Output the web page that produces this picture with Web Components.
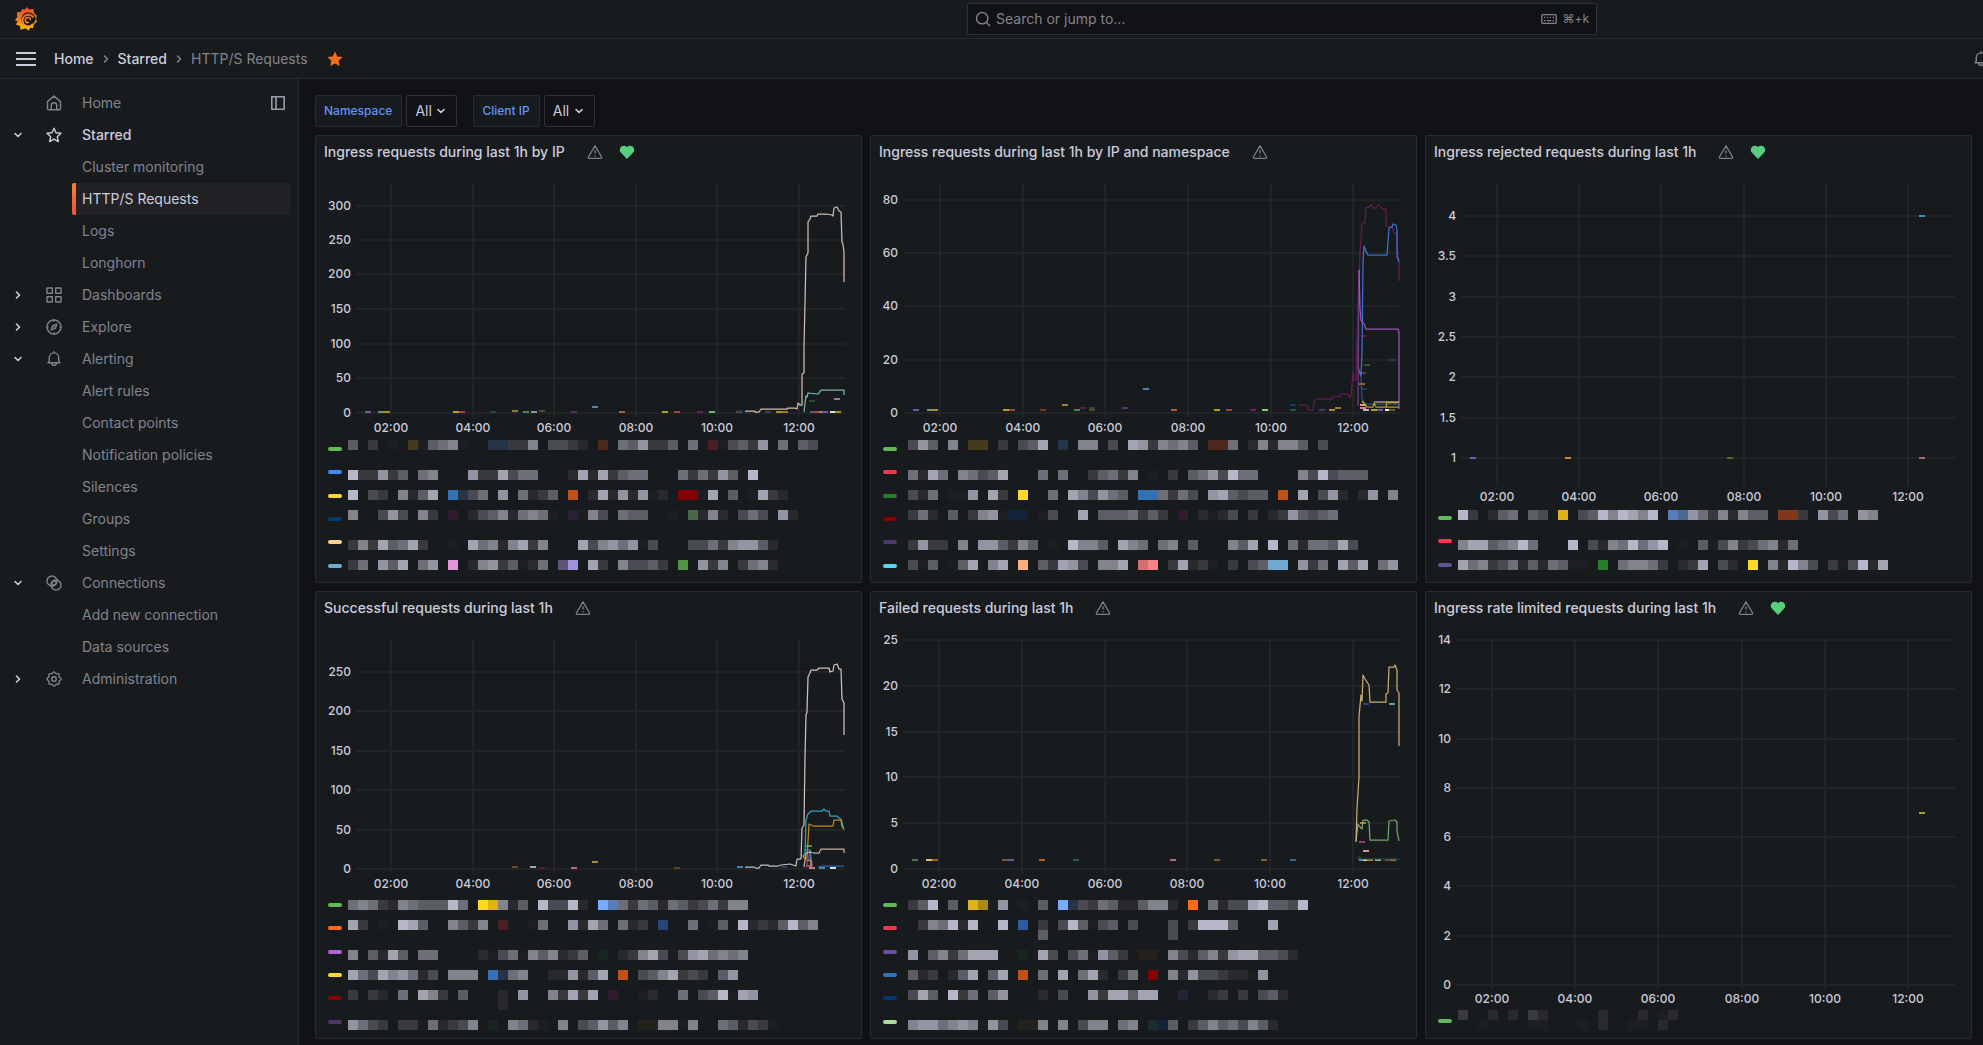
<!DOCTYPE html>
<html lang="en">
<head>
<meta charset="utf-8">
<title>HTTP/S Requests - Grafana</title>
<style>
  html { background: #111217; }
  body {
    margin: 0;
    font: 14px/20px Inter, "Liberation Sans", sans-serif;
    color: #ccccdc;
    --panel: #171b1d;
    --canvas: #111216;
    --line: #282b2f;
    --line-strong: #303238;
    --muted: #83838d;
  }
</style>
</head>
<body>
<app-shell>
  <top-bar slot="top"></top-bar>
  <crumb-bar slot="top"></crumb-bar>
  <side-nav slot="nav"></side-nav>
  <variable-bar>
    <variable-picker name="Namespace"></variable-picker>
    <variable-picker name="Client IP"></variable-picker>
  </variable-bar>
  <panel-grid>
    <dash-panel heading="Ingress requests during last 1h by IP" healthy><time-chart series="ip"></time-chart><series-legend series="ip"></series-legend></dash-panel>
    <dash-panel heading="Ingress requests during last 1h by IP and namespace"><time-chart series="ipns"></time-chart><series-legend series="ipns"></series-legend></dash-panel>
    <dash-panel heading="Ingress rejected requests during last 1h" healthy><time-chart series="rejected"></time-chart><series-legend series="rejected"></series-legend></dash-panel>
    <dash-panel heading="Successful requests during last 1h"><time-chart series="success"></time-chart><series-legend series="success"></series-legend></dash-panel>
    <dash-panel heading="Failed requests during last 1h"><time-chart series="failed"></time-chart><series-legend series="failed"></series-legend></dash-panel>
    <dash-panel heading="Ingress rate limited requests during last 1h" healthy><time-chart series="limited"></time-chart><series-legend series="limited"></series-legend></dash-panel>
  </panel-grid>
</app-shell>

<script>
const stroke = 'fill="none" stroke="currentColor" stroke-width="1.4" stroke-linecap="round" stroke-linejoin="round"';
const icons = {
  menu: '<path d="M0 2h20M0 8h20M0 14h20" fill="none" stroke="currentColor" stroke-width="2"/>',
  home: `<path d="M1.5 6.6 8 1.1l6.5 5.5v6.9a1.3 1.3 0 0 1-1.3 1.3H2.8a1.3 1.3 0 0 1-1.3-1.3zM5.3 14.6v-4.1a2.7 2.7 0 0 1 5.4 0v4.1" ${stroke}/>`,
  star: `<path d="M8 1.2 10 5.8l5 .5-3.7 3.4 1 4.9L8 12.1l-4.3 2.5 1-4.9L1 6.3l5-.5z" ${stroke}/>`,
  starFill: '<path d="M8 .4l2.3 5 5.3.6-3.9 3.7 1 5.4L8 12.4l-4.7 2.7 1-5.4L.4 6l5.3-.6z" fill="#f46d1b"/>',
  apps: `<path d="M1 1h5.3v5.3H1zM9.7 1H15v5.3H9.7zM1 9.7h5.3V15H1zM9.7 9.7H15V15H9.7z" ${stroke}/>`,
  compass: `<circle cx="8" cy="8" r="7" ${stroke}/><path d="M10.9 5.1 9.3 9.3l-4.2 1.6 1.6-4.2zM8 1v1M8 14v1M1 8h1M14 8h1" ${stroke}/><circle cx="8" cy="8" r=".8" fill="currentColor"/>`,
  bell: `<path d="M2 11.8h12l-1.3-2V6.6a4.7 4.7 0 0 0-9.4 0v3.2zM8 1.9V.7M5.6 12a2.4 2.4 0 0 0 4.8 0" ${stroke}/>`,
  link: `<circle cx="6" cy="6" r="5" ${stroke}/><circle cx="10" cy="10" r="5" ${stroke}/><path d="M8 5.2 10.8 8 8 10.8 5.2 8z" ${stroke}/>`,
  cog: `<path d="M8 .9c1 0 1.300 1.500 2.100 1.800s2-.6 2.700.2-.2 1.800.2 2.700 2.100 1.200 2.100 2.400-1.600 1.500-2 2.300.5 2-.3 2.800-1.900-.2-2.700.2S9 15.100 8 15.100s-1.300-1.500-2.100-1.800-2 .6-2.700-.2.200-1.900-.2-2.700S.9 9 .9 8s1.600-1.500 2-2.300-.5-2 .3-2.800 1.900.2 2.700-.2S7 .9 8 .9z" ${stroke}/><circle cx="8" cy="8" r="2.300" ${stroke}/>`,
  down: '<path d="M5 6.5 8 9.5l3-3" fill="none" stroke="currentColor" stroke-width="1.6" stroke-linecap="round" stroke-linejoin="round"/>',
  right: '<path d="M6.5 5l3 3-3 3" fill="none" stroke="currentColor" stroke-width="1.6" stroke-linecap="round" stroke-linejoin="round"/>',
  dock: '<path d="M1.8 1.8h12.4v12.4H1.8zM6 2v12" fill="none" stroke="currentColor" stroke-width="1.6" stroke-linejoin="round"/>',
  search: '<circle cx="7.2" cy="7.2" r="5.7" fill="none" stroke="currentColor" stroke-width="1.4"/><path d="M11.4 11.4l3.2 3.2" fill="none" stroke="currentColor" stroke-width="1.4" stroke-linecap="round"/>',
  keyboard: '<rect x=".8" y="3.6" width="14.4" height="8.8" rx="1.2" fill="none" stroke="currentColor" stroke-width="1.3"/><path d="M3 6.4h1.4M6 6.4h1.2M8.8 6.4H10M11.6 6.4H13M3 9.6h1.4M5.6 9.6h4.8M11.6 9.6H13" stroke="currentColor" stroke-width="1.3"/>',
  warning: '<path d="M8 1.8 14.6 13a.9.9 0 0 1-.8 1.3H2.2A.9.9 0 0 1 1.4 13z" fill="none" stroke="currentColor" stroke-width="1.3" stroke-linejoin="round"/><path d="M8 6.2v3.4M8 11.2v1.3" stroke="currentColor" stroke-width="1.3"/>',
  heart: '<path d="M8 15 2 8.8a4 4 0 0 1-.8-4.6C2.400 1.600 6 1 8 3.300c2-2.300 5.600-1.700 6.800.9A4 4 0 0 1 14 8.800z" fill="#58ce7e"/>'
};
const icon = (name, w = 16, h = 16) => `<svg width="${w}" height="${h}" viewBox="0 0 ${w} ${h}" aria-hidden="true">${icons[name]}</svg>`;

/* Shared base: renders view() once into an open shadow root. */
class View extends HTMLElement {
  connectedCallback() {
    if (this.shadowRoot) return;
    this.attachShadow({ mode: 'open' }).innerHTML =
      `<style>*{box-sizing:border-box}svg{display:block;flex:none}a{color:inherit;text-decoration:none}button{appearance:none;background:none;border:0;padding:0;margin:0;font:inherit;color:inherit;display:flex}${this.css()}</style>${this.view()}`;
  }
}

customElements.define('app-shell', class extends View {
  css() { return `:host{display:block;min-height:100vh;overflow:hidden}
    .body{display:grid;grid-template-columns:299px minmax(0,1fr)}
    main{padding:16px 11px 6px 16px;display:flex;flex-direction:column;gap:8px}`; }
  view() { return `<slot name="top"></slot><div class="body"><slot name="nav"></slot><main><slot></slot></main></div>`; }
});

customElements.define('top-bar', class extends View {
  css() { return `:host{display:block;background:var(--panel);border-bottom:1px solid var(--line)}
    .row{height:38px;display:grid;grid-template-columns:952fr 630fr 386fr;padding-left:15px;align-items:center}
    .search{height:32px;display:flex;align-items:center;gap:5px;padding:0 7px;background:var(--canvas);border:1px solid var(--line-strong);border-radius:2px;color:var(--muted)}
    input{flex:1;min-width:0;background:none;border:0;outline:0;padding:0;font:inherit;color:inherit}
    input::placeholder{color:inherit;opacity:1}
    kbd{font:12px/16px Inter,"DejaVu Sans",sans-serif}`; }
  view() { return `<header class="row"><a href="#" aria-label="Grafana"><svg width="22" height="24" viewBox="0 0 22 24">
      <defs><linearGradient id="g" x1="0" y1="0" x2="0" y2="24" gradientUnits="userSpaceOnUse"><stop offset="0" stop-color="#f0402a"/><stop offset=".5" stop-color="#f57e20"/><stop offset="1" stop-color="#fcc60c"/></linearGradient></defs>
      <path fill="url(#g)" d="M11.700 0 14 2.300 18.500 2 19 6 21.700 8.500 21.300 12 21.800 15 19 17.200 18 21.200 15.200 20.800 13.600 23.800 10.800 21.300 5.500 22.800 5 18.900.8 17.500 2.600 14.600 0 13 2.300 10 1.800 5.200 5.800 5 7.200 2 10 2.500z"/>
      <path d="M20.800 12.500a8.300 8.300 0 0 0-8-7.300 7.200 7.200 0 1 0 4.900 12.900z" fill="#171b1d"/>
      <path d="M18.200 16.800a5.900 5.900 0 1 1 .2-6.200" fill="none" stroke="url(#g)" stroke-width="2"/>
      <path d="M15.800 15.400a3.600 3.600 0 1 1-.5-4.500" fill="#171b1d"/>
      <path d="M13.200 15.600a2.600 2.600 0 1 1 2.300-3" fill="none" stroke="url(#g)" stroke-width="1.500" stroke-linecap="round"/></svg></a>
    <div class="search">${icon('search')}<input type="text" placeholder="Search or jump to..." aria-label="Search or jump to">${icon('keyboard')}<kbd>⌘+k</kbd></div></header>`; }
});

customElements.define('crumb-bar', class extends View {
  css() { return `:host{display:block;background:var(--panel);border-bottom:1px solid var(--line)}
    .row{height:39px;display:flex;align-items:center;padding-left:16px}
    nav{flex:1;display:flex;align-items:center;margin-left:18px;gap:4px;font-weight:500}
    nav svg{color:var(--muted)}
    .here{color:var(--muted);font-weight:400}
    .fav{margin-left:15px}
    .bell{color:var(--muted);margin-right:-6px}`; }
  view() { return `<div class="row"><button aria-label="Toggle menu">${icon('menu', 20, 16)}</button>
    <nav aria-label="Breadcrumbs"><a href="#">Home</a>${icon('right')}<a href="#">Starred</a>${icon('right')}<span class="here">HTTP/S Requests</span><button class="fav" aria-label="Unstar">${icon('starFill')}</button></nav>
    <button class="bell" aria-label="News">${icon('bell')}</button></div>`; }
});

const menu = [
  ['Home', 'home', ''], ['Starred', 'star', 'down', 'lit', ['Cluster monitoring', '*HTTP/S Requests', 'Logs', 'Longhorn']],
  ['Dashboards', 'apps', 'right'], ['Explore', 'compass', 'right'],
  ['Alerting', 'bell', 'down', '', ['Alert rules', 'Contact points', 'Notification policies', 'Silences', 'Groups', 'Settings']],
  ['Connections', 'link', 'down', '', ['Add new connection', 'Data sources']],
  ['Administration', 'cog', 'right']
];
customElements.define('side-nav', class extends View {
  css() { return `:host{display:block;background:var(--panel);border-right:1px solid var(--line);padding:8px 8px 0 10px}
    ul{list-style:none;margin:0;padding:0}
    .item{height:32px;display:grid;grid-template-columns:36px 36px 1fr auto;align-items:center;color:var(--muted);padding-right:4px}
    .item a{font-weight:400}
    .lit{color:#ccccdc}.lit a{font-weight:500}
    .tog{color:#ccccdc}
    .dock{color:#9d9daa}
    .sub a{display:flex;align-items:center;height:32px;margin-left:62px;padding-left:10px;color:var(--muted)}
    .sub a.on{color:#ccccdc;background:#222226;border-radius:2px;background-image:linear-gradient(#f58036,#f04e3a);background-size:4px 100%;background-repeat:no-repeat}`; }
  view() { return `<nav aria-label="Main"><ul>${menu.map(([t, ic, ch, cls = '', sub]) => `<li><div class="item ${cls}">
      ${ch ? `<button class="tog" aria-label="Toggle ${t}">${icon(ch)}</button>` : '<span></span>'}${icon(ic)}<a href="#">${t}</a>
      ${t === 'Home' ? `<button class="dock" aria-label="Undock menu">${icon('dock')}</button>` : ''}</div>
      ${sub ? `<ul class="sub">${sub.map(s => `<li><a href="#"${s[0] === '*' ? ' class="on" aria-current="page"' : ''}>${s.replace('*', '')}</a></li>`).join('')}</ul>` : ''}</li>`).join('')}</ul></nav>`; }
});

customElements.define('variable-bar', class extends View {
  css() { return ':host{display:flex;gap:16px}'; }
  view() { return '<slot></slot>'; }
});
customElements.define('variable-picker', class extends View {
  css() { return `:host{display:flex;gap:4px;height:32px}
    label{display:flex;align-items:center;padding:0 9px 0 8px;background:var(--panel);border:1px solid var(--line);border-radius:2px;color:#5f93f5;font-size:12px;font-weight:500}
    .box{display:grid;grid-template-columns:1fr;align-items:center;border:1px solid var(--line-strong);border-radius:2px;background:var(--canvas);width:51px}
    select{grid-area:1/1;appearance:none;background:none;border:0;outline:0;height:30px;padding:0 0 0 8px;font:inherit;color:inherit;width:100%}
    option{background:#181b1f}
    svg{grid-area:1/1;justify-self:end;margin-right:7px;pointer-events:none}`; }
  view() { return `<label for="v">${this.getAttribute('name')}</label><div class="box"><select id="v"><option>All</option></select>${icon('down')}</div>`; }
});

customElements.define('panel-grid', class extends View {
  css() { return ':host{display:grid;grid-template-columns:repeat(3,minmax(0,1fr));gap:8px}'; }
  view() { return '<slot></slot>'; }
});
customElements.define('dash-panel', class extends View {
  css() { return `:host{display:block;background:var(--panel);border:1px solid var(--line);border-radius:2px}
    header{height:32px;display:flex;align-items:center;gap:16px;padding:0 8px}
    h2{margin:0 6px 0 0;font:inherit;font-weight:500;white-space:nowrap}
    svg{color:#7d7f87}`; }
  view() { return `<section><header><h2>${this.getAttribute('heading')}</h2>${icon('warning')}${this.hasAttribute('healthy') ? icon('heart') : ''}</header><slot></slot></section>`; }
});

/* view: x, y, width, height of the drawing; plot: left, top, right, bottom. */
const charts = {
  ip: {
    view: [316, 168, 545, 268], plot: [356, 184, 845, 417], lx: 351, ly: 428,
    ys: { 300: 206, 250: 240, 200: 274, 150: 309, 100: 344, 50: 378, 0: 413 }, xs: [391, 473, 554, 636, 717, 799],
    lines: [
      ['#f3d8c8', '745,411 755,411 755,412 759,412 761,409 787,409 788,408 795,408 797,409 798,403 800,405 802,405 802,374 804,373 804,347 806,257 808,253 808,222 810,219 811,216 817,216 818,214 826,214 832,215 833,216 834,208 837,207 839,211 841,212 842,242 843,244 844,252 844,282'],
      ['#8ecdd2', '804,412 805,403 806,396 807,397 808,393 818,394 821,390 844,390 844,395']],
    marks: '368,412,#6a5f94 381,412,#6f9a62 387,412,#a8901f 456,412,#b0a423 462,412,#a8404c 493,412,#28454d 515,411,#8f7a3a 526,412,#3f8a48 534,412,#9a8f8a 542,411,#5c4a1c 574,412,#5c2c66 595,407,#5a7fb5 622,412,#a8603a 665,412,#a8a023 677,412,#9a4a28 700,412,#6a1f5c 712,412,#7fb56a 739,412,#6b4a30 740,411,#173a60 768,412,#433a66 779,412,#a8901f 785,412,#a07a1a 813,412,#4b5a78 816,412,#a8404c 822,412,#9a9030 825,412,#7356a0 833,412,#e8dcd0 838,412,#a8901f 812,401,#28502c 837,399,#8f8580'
  },
  ipns: {
    view: [871, 168, 545, 268], plot: [904, 184, 1400, 417], lx: 898, ly: 428,
    ys: { 80: 200, 60: 253, 40: 306, 20: 360, 0: 413 }, xs: [940, 1023, 1105, 1188, 1271, 1353],
    lines: [
      ['#6e1e5e', '1299,405 1307,405 1309,410 1313,410 1314,402 1316,399 1332,399 1334,396 1340,397 1341,394 1348,394 1349,397 1351,397 1353,372 1354,380 1356,380 1358,307 1360,253 1362,224 1365,223 1366,207 1369,207 1371,205 1374,208 1376,208 1378,205 1380,206 1382,209 1386,209 1386,226 1392,227 1394,233 1397,233 1397,249 1399,260 1399,281'],
      ['#1f4a7a', '1357,338 1358,367'],
      ['#3f83ee', '1358,367 1361,376 1362,353 1363,263 1364,246 1366,251 1368,255 1387,255 1389,228 1392,227 1393,224 1396,225 1397,230 1397,257 1399,262'],
      ['#7c4390', '1358,406 1359,270'],
      ['#b55fd6', '1359,270 1360,308 1361,320 1364,324 1366,329 1398,329 1399,333 1399,409'],
      ['#2f5f8f', '1361,376 1362,399 1365,404 1399,404'],
      ['#f0c5a8', '1374,402 1399,402'],
      ['#d8b420', '1362,401 1367,407 1373,407 1374,403 1376,407 1386,407 1387,402 1390,403 1392,402 1395,403 1399,402 M1386,407 1399,407']],
    marks: '916,410,#6a5f94 930,410,#6f9a62 935,410,#a8901f 1006,410,#b0a423 1012,410,#a8404c 1043,410,#7a3a20 1065,405,#a08040 1077,410,#3f8a48 1083,408,#5a1c4c 1092,408,#26484c 1092,410,#5c4a1c 1125,408,#5c3570 1146,389,#5a7fb5 1174,410,#b0603a 1217,410,#a8a023 1229,410,#9a4a28 1253,410,#6a1f5c 1265,410,#8fc57a 1293,410,#27504f 1293,405,#173a60 1322,410,#433a66 1332,410,#a8901f 1338,408,#a0782a 1364,336,#7a1218 1392,360,#3c3058 1367,365,#246028 1363,373,#4c3a66 1362,384,#a06020 1364,389,#173a60 1363,405,#f09a68 1363,408,#d080a0 1366,410,#c8b0a8 1374,410,#a8a023 1380,410,#6a5fa0 1388,410,#f3e8d8 1392,410,#6a5a20'
  },
  rejected: {
    view: [1426, 168, 545, 336], plot: [1461, 184, 1955, 486], lx: 1456, ly: 497,
    ys: { 4: 216, '3.5': 256, 3: 297, '2.5': 337, 2: 377, '1.5': 418, 1: 458 }, xs: [1497, 1579, 1661, 1744, 1826, 1908],
    lines: [], marks: '1473,458,#6a5fa8 1568,458,#d08a35 1730,458,#5c661c 1922,458,#a86e74 1922,216,#4a8db0'
  },
  success: {
    view: [316, 624, 545, 268], plot: [356, 640, 845, 873], lx: 351, ly: 884,
    ys: { 250: 672, 200: 711, 150: 751, 100: 790, 50: 830, 0: 869 }, xs: [391, 473, 554, 636, 717, 799],
    lines: [
      ['#3fb8d2', '803,857 805,853 806,820 808,814 811,811 822,811 824,809 826,811 829,811 830,816 837,816 839,818 841,819 844,830'],
      ['#dd9c12', '803,855 804,858 807,858 809,824 813,826 833,826 834,820 841,820 842,827 844,828'],
      ['#7a3f8c', '806,868 808,856 813,867 M807,866 810,850 813,868'],
      ['#3f9eb2', '804,850 810,850 811,866'],
      ['#e0a030', '806,860 811,861 811,866'],
      ['#e2cbc0', '804,867 806,853 810,852 814,853 819,853 821,849 844,849 844,853'],
      ['#2f74bd', '818,867 822,866 844,866'],
      ['#d5e0e0', '745,867 754,867 756,868 759,868 761,865 768,865 769,866 778,866 781,865 790,864 793,865 796,866 797,859 801,859'],
      ['#f6dcd6', '801,859 802,828 804,825 805,757 806,715 807,712 808,677 810,673 811,670 817,670 819,668 829,668 830,672 833,671 834,665 837,664 839,669 841,669 842,699 844,703 844,735']],
    marks: '515,867,#7a4518 533,867,#9aabad 542,868,#581c34 574,868,#c060a0 595,862,#a89040 677,868,#5c4a1c 740,867,#3f7fc0 784,867,#24405c 809,846,#4f8a50 809,866,#c05030 812,868,#c08a80 822,868,#3f8aa0 833,868,#c8e8f0'
  },
  failed: {
    view: [871, 624, 545, 268], plot: [903, 640, 1400, 873], lx: 898, ly: 884,
    ys: { 25: 640, 20: 686, 15: 732, 10: 777, 5: 823, 0: 869 }, xs: [939, 1022, 1105, 1187, 1270, 1353],
    lines: [
      ['#84bd7e', '1356,841 1358,824 1360,827 1362,829 1363,820 1367,820 1369,822 1370,840 1388,840 1389,821 1395,820 1397,822 1397,831 1399,841'],
      ['#2d5f33', '1358,860 1359,857 1362,859 1399,859'],
      ['#e8c47e', '1356,842 1357,808 1359,777 1359,716 1361,695 1362,701 1363,675 1365,679 1369,685 1370,702 1386,702 1386,694 1388,693 1389,667 1394,667 1395,665 1397,670 1397,690 1399,693 1399,746']],
    marks: '915,860,#4f7050 929,860,#dcc070 935,860,#a8601a 1005,860,#7a5c28 1011,860,#5560a0 1042,860,#b06424 1076,860,#2c5a4a 1173,860,#b860a0 1217,860,#7a5c28 1264,860,#80602c 1293,860,#3a60a0 1366,704,#353f88 1392,704,#5aa590 1363,823,#c07838 1362,842,#8a3f80 1366,851,#d89890 1362,860,#5a80d0 1366,860,#f0e0a0 1370,860,#d07050 1378,860,#a0b090 1388,860,#7a3f80 1393,860,#b06424'
  },
  limited: {
    view: [1426, 624, 545, 382], plot: [1456, 640, 1955, 989], lx: 1451, ly: 999,
    ys: { 14: 640, 12: 689, 10: 739, 8: 788, 6: 837, 4: 886, 2: 936, 0: 985 }, xs: [1492, 1575, 1658, 1742, 1825, 1908],
    lines: [], marks: '1922,813,#a8a028'
  }
};
customElements.define('time-chart', class extends View {
  css() { return `:host{display:block}svg{width:100%;height:auto}
    text{font:500 12px Inter,sans-serif;fill:#ccccdc}
    .g{stroke:#212528;stroke-width:2}.s{fill:none;stroke-width:1.25;stroke-linejoin:round;stroke-opacity:.85}`; }
  view() {
    const c = charts[this.getAttribute('series')], [l, t, r, b] = c.plot;
    const ys = Object.entries(c.ys).sort((p, q) => p[1] - q[1]);
    return `<svg viewBox="${c.view.join(' ')}" role="img" aria-label="Requests over time">
      ${ys.map(([v, y]) => `<path class="g" d="M${l} ${y}H${r}"/><text x="${c.lx}" y="${y + 4}" text-anchor="end">${v}</text>`).join('')}
      ${c.xs.map((x, i) => `<path class="g" d="M${x} ${t}V${b}"/><text x="${x}" y="${c.ly + 4}" text-anchor="middle">${String(i * 2 + 2).padStart(2, '0')}:00</text>`).join('')}
      ${c.marks.split(' ').map(m => { const [x, y, f] = m.split(','); return `<rect x="${x - 3}" y="${y - 1}" width="6" height="2" fill="${f}"/>`; }).join('')}
      ${c.lines.map(([s, d]) => `<path class="s" stroke="${s}" d="M${d}"/>`).join('')}</svg>`;
  }
});

/* Redacted series names: one character per 10px block. */
const tones = { 1: '#1d1e21', 2: '#2a2a2e', 3: '#39393e', 4: '#4a4a52', 5: '#5d5d66', 6: '#6e6e78', 7: '#83838e', 8: '#9393a1', 9: '#a3a3b2', X: '#b8b7c9',
  o: '#453a1c', n: '#26344a', N: '#14233a', b: '#4c281d', m: '#4a1e24', p: '#2f1a2e', v: '#282236', g: '#4d664a', h: '#25221e', e: '#19251f', t: '#1a2c30',
  B: '#3470b5', O: '#c05018', Q: '#ff6a13', R: '#870006', K: '#e496da', w: '#5c5578', V: '#a292dc', G: '#529445', Y: '#fbd929', y: '#dfb217', q: '#a88a16',
  P: '#fbae84', s: '#d36e73', S: '#f78385', C: '#70a8d0', L: '#587db8', l: '#4c6794', u: '#80371a', F: '#277d28', A: '#76adfc', D: '#28457a', E: '#2f5a9c' };
const rows1 = [440, 470, 490, 510, 540, 560], rows4 = [900, 920, 950, 970, 990, 1020];
const legends = {
  ip: { view: [316, 436, 545, 146], x: 348, sy: [449, 472, 496, 519, 542, 566], sw: ['#66b85c', '#438bf0', '#f8d72a', '#05396e', '#fdd28c', '#71aad2'], y: rows1,
    cells: ['5.3.1.o15671..nn337.4432.b.658335.6.m14538.6.54', 'X33835.67...8339466...29293566...6363851X', 'X.43.7259.Bn46.8.6235.O.29282812.RR19.5.1932', '7..484.73.p.245726761.v174.655..1.g272.464.82', '37395693..1.96727937...94786814...446378852', '36.859.68.K.27835126.wV.93.74453.G.837.3672'] },
  ipns: { view: [871, 436, 545, 146], x: 908, sy: [449, 472, 496, 519, 542, 566], sw: ['#66b85c', '#f2384e', '#277d28', '#870006', '#4b3868', '#5ad6ee'], y: rows1,
    cells: ['485.7.oo.3.459.n.7714.9837675.bb6.272775.4', '6296.76459...6.6..35637.1.3.5684X66....74X4555', '426.118.93.Y..6.974865.BB6364.895455.O.9.482.28.7', '362.5.3781NN.14..9.5556353.p.2124.3.2385456', '3833.7.885375.1.X775.976.6715...759.X.6266594', '415.159.79.P.53984.779.sS.39231.3.45CC.836.959.68'] },
  rejected: { view: [1426, 504, 545, 78], x: 1458, sy: [518, 541, 565], sw: ['#66b85c', '#f2384e', '#67519a'], y: [510, 540, 560],
    cells: ['X3.256.54.y.45X7X97X.Ll86372755.uu3.846.87', '799567X6...X.4276X68X.1.5147346726', '9673462526511.F.67763.239.42.Y.72X74.314X29'] },
  success: { view: [316, 892, 545, 146], x: 348, sy: [905, 928, 952, 975, 998, 1022], sw: ['#66b85c', '#ff6a13', '#b564d6', '#fbd929', '#870006', '#4b3868'], y: [...rows4, 1000],
    cells: ['6763276555X6.Yy725.X44X2.AL6365265346377', '93.1.X95..7537.m..16..8296.623.D..6.15.X2325X57', '7.5295.66....21461757235.e.2379414896767', '964978624.777.Bn67..228259.O.4579343.58', '3.32.6.973.5...2.8..73939.p..12..6.45X198', '8643.33162347.e.7621.7.45857.hh7717..652431', '...............2'] },
  failed: { view: [871, 892, 545, 146], x: 908, sy: [905, 928, 952, 975, 998, 1022], sw: ['#66b85c', '#f2384e', '#67519a', '#3470b5', '#05396e', '#addb9a'], y: [...rows4, 930],
    cells: ['35X.5.yq18.1.5.An4365225772.Q.62449X554X', '.376X2X..X.E.3.4X5145.4...4.3XXX5...9', '8.5736999..e.94.461853.hh.7425738995542', '523.259.59.O.6.9.692.36.R.7284432218', '495.X36.58...2.4..8399599..v..23.3.452', '7886787184.hh7.7.477.67.tN5.357564752', '.............5............4'] },
  limited: { view: [1426, 1006, 545, 32], x: 1458, sy: [1021], sw: ['#66b85c'], y: [1010, 1020],
    cells: ['3..2.2.32.....2...2.12', '..1....11...1.2..11.2.'] }
};
customElements.define('series-legend', class extends View {
  css() { return ':host{display:block}svg{width:100%;height:auto}'; }
  view() {
    const g = legends[this.getAttribute('series')], sx = g.view[0] + 12;
    return `<svg viewBox="${g.view.join(' ')}" role="img" aria-label="Legend">
      ${g.sy.map((y, i) => `<rect x="${sx}" y="${y - 2}" width="14" height="4" rx="2" fill="${g.sw[i]}"/>`).join('')}
      <g shape-rendering="crispEdges">${g.cells.map((row, i) => [...row].map((ch, k) => ch === '.' ? '' : `<rect x="${g.x + k * 10}" y="${g.y[i]}" width="10" height="10" fill="${tones[ch]}"/>`).join('')).join('')}</g></svg>`;
  }
});
</script>
</body>
</html>
